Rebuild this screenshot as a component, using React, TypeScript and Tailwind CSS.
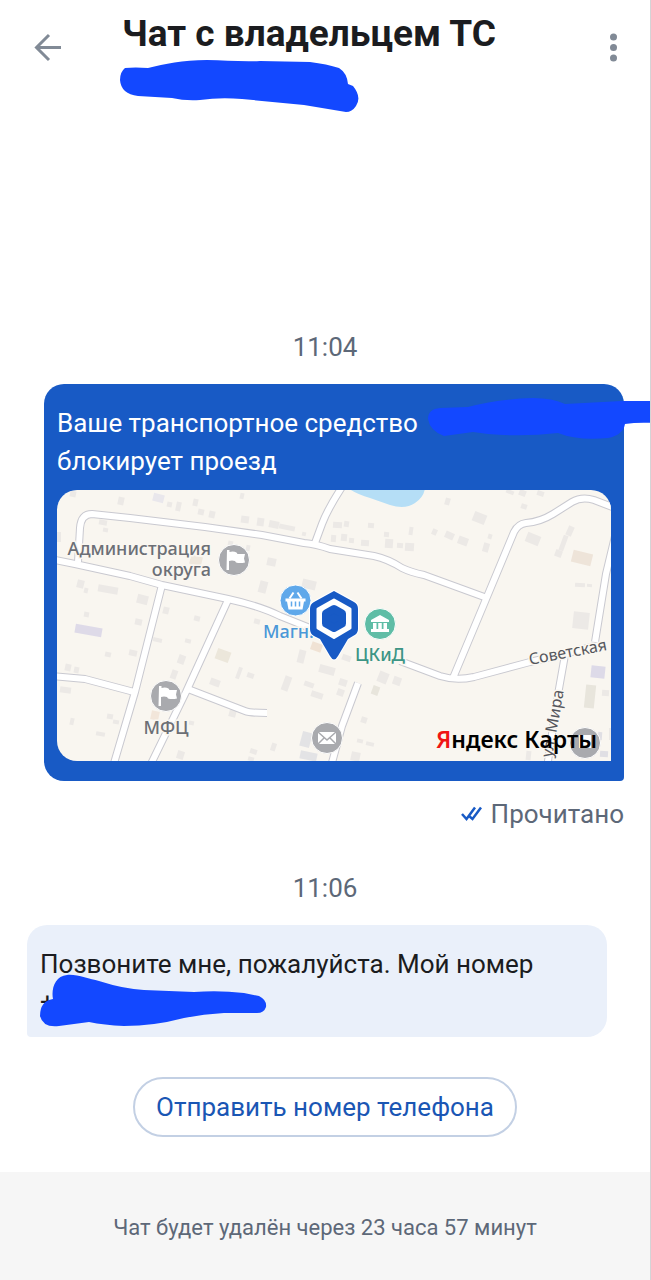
import React from "react";

type Building = [x: number, y: number, w: number, h: number, turn: number, fill?: string];

const ROADS = [
  "M78 562 L80 528 Q81 514 92 514 L130 518 L205 527 L262 535 L304 543 Q316 544 330 549 L374 556 Q388 559 402 568 Q410 572 424 575 L487 598",
  "M315 543 L322 524 Q328 508 344 484",
  "M50 559 L75 564 L130 576 L162 585 L228 599 Q260 606 280 616 L325 634",
  "M400 661 L440 676 Q456 681 474 677 L530 662 L600 645",
  "M162 585 L135 692 L112 770",
  "M228 600 L186 692 L149 768",
  "M50 676 L85 679 L134 692",
  "M188 689 L245 711 Q250 713 267 713",
  "M453 678 L484 604 L514 532 Q518 524 526 523 Q540 522 553 514 L572 502 Q582 496 594 500 L620 510",
  "M616 532 L606 574 L595 642",
  "M565 655 L557 700 L547 768",
  "M358 683 L342 726 L330 770",
];

const BUILDINGS: Building[] = [
  [70, 491, 6, 6, 12], [118, 497, 6, 8, 12], [153, 494, 11, 8, 14, "#e9e7ec"], [167, 502, 5, 5, 12],
  [176, 502, 5, 9, 12], [193, 499, 5, 7, 12], [198, 509, 6, 6, 12], [209, 511, 6, 7, 12],
  [240, 493, 4, 6, 12], [241, 516, 8, 7, 8], [257, 518, 7, 8, 8], [269, 521, 10, 7, 12],
  [279, 525, 16, 5, 12], [302, 532, 4, 4, 12], [99, 520, 8, 5, 10], [103, 528, 5, 4, 10],
  [57, 532, 4, 10, 0], [228, 541, 5, 5, 12], [246, 545, 4, 6, 12], [267, 558, 9, 8, 12],
  [190, 556, 12, 9, 14, "#eee7dc"], [333, 522, 9, 6, 4], [331, 535, 5, 7, 4], [344, 521, 5, 6, 8],
  [341, 534, 6, 7, 6], [349, 538, 5, 5, 6], [361, 540, 8, 6, 4], [368, 523, 6, 5, 4],
  [384, 532, 5, 5, 4], [385, 539, 8, 9, 4], [397, 543, 6, 5, 4], [405, 543, 9, 8, 4],
  [409, 527, 4, 8, 8], [432, 529, 5, 6, 24], [445, 532, 9, 7, 24], [458, 537, 10, 8, 20],
  [445, 498, 5, 7, 16], [473, 513, 13, 10, 22], [488, 534, 4, 5, 16], [483, 543, 6, 9, 16],
  [506, 490, 8, 4, 22], [519, 490, 7, 6, 22], [537, 491, 7, 5, 18], [521, 504, 6, 5, 18],
  [526, 534, 14, 10, 22], [567, 526, 6, 10, 24], [561, 535, 5, 16, 20], [555, 550, 7, 7, 20],
  [572, 552, 20, 12, 14, "#eee4d9"], [77, 580, 7, 8, 14], [84, 588, 4, 5, 14], [98, 586, 20, 7, 10],
  [137, 595, 11, 9, 14], [75, 626, 27, 9, 10, "#dedae8"], [84, 612, 5, 5, 10], [135, 619, 7, 6, 12],
  [153, 638, 9, 4, 12], [129, 650, 8, 6, 12], [105, 652, 6, 5, 12], [65, 664, 6, 7, 12],
  [74, 667, 5, 6, 12], [60, 687, 11, 6, 8], [163, 607, 6, 7, 14], [194, 616, 6, 5, 14],
  [185, 639, 6, 4, 14], [178, 655, 7, 9, 20], [171, 670, 6, 9, 20], [216, 650, 14, 11, 20, "#ece7db"],
  [237, 667, 4, 12, 20], [247, 673, 7, 5, 20], [210, 679, 10, 7, 20], [259, 581, 8, 12, 15],
  [302, 580, 14, 9, 14], [254, 619, 6, 5, 14], [298, 650, 7, 13, 14], [311, 643, 11, 8, 20, "#f0e2d4"],
  [319, 666, 16, 8, 16], [283, 676, 7, 15, 20], [304, 682, 10, 5, 20], [311, 692, 12, 6, 18],
  [342, 655, 9, 6, 20], [339, 679, 8, 7, 18], [337, 689, 7, 7, 20], [378, 672, 10, 11, 22],
  [393, 677, 8, 8, 20], [372, 686, 7, 9, 20, "#e8e5dc"], [70, 718, 4, 7, 12], [96, 732, 9, 4, 10],
  [107, 714, 6, 5, 10], [113, 720, 6, 4, 10], [151, 711, 8, 9, 12, "#f2e6da"], [189, 721, 5, 4, 12],
  [229, 710, 7, 7, 15], [271, 743, 5, 8, 18], [250, 749, 7, 5, 18], [248, 757, 6, 4, 15],
  [301, 732, 10, 15, 15, "#e3e3e5"], [300, 752, 17, 8, 12, "#e3e3e5"], [177, 751, 7, 8, 18],
  [361, 717, 6, 6, 18], [357, 739, 6, 4, 12], [366, 742, 8, 4, 12], [351, 752, 9, 9, 12],
  [575, 583, 10, 4, 4], [587, 584, 5, 3, 4], [573, 612, 16, 17, 6], [591, 666, 14, 12, 6, "#dddae8"],
  [585, 685, 10, 23, 6, "#e8e5dc"], [602, 690, 7, 6, 4], [598, 732, 4, 8, 4, "#e0dfe4"],
  [600, 751, 8, 6, 4, "#e0dfe4"], [609, 728, 2, 12, 0], [526, 751, 5, 9, 6],
];

function MarkerFlag({ cx, cy }: { cx: number; cy: number }) {
  return (
    <g transform={`translate(${cx} ${cy})`}>
      <circle r="15.5" fill="#a9aaae" stroke="#fff" strokeWidth="1" />
      <path d="M-7 -10 h2.500 v2 q4 -1 7 0.500 l1 1.500 h7.500 l-1 4.500 l1 4 q-5 1 -9 0 l-1 -1.500 q-3 -1 -6 0 v9 h-2.500 z" fill="#fff" />
    </g>
  );
}

function StreetMap() {
  return (
    <svg
      viewBox="57 490 554 271"
      preserveAspectRatio="xMidYMid slice"
      className="block w-full rounded-[20px] rounded-br-none"
      role="img"
      aria-label="Карта"
      fontFamily="'Noto Sans', sans-serif"
    >
      <rect x="57" y="490" width="554" height="271" fill="#f9f6f0" />
      {BUILDINGS.map(([x, y, w, h, turn, fill], i) => (
        <rect
          key={i}
          x={x}
          y={y}
          width={w}
          height={h}
          fill={fill ?? "#ece9e6"}
          transform={`rotate(${turn} ${x + w / 2} ${y + h / 2})`}
        />
      ))}
      <path d="M348 488 Q356 494 370 498 L390 505 Q405 510 415 503 Q424 497 425 488 Z" fill="#b5def6" />
      <g fill="none" stroke="#c9c9d0" strokeWidth="8" strokeLinejoin="round">
        {ROADS.map((d) => <path key={d} d={d} />)}
      </g>
      <g fill="none" stroke="#fff" strokeWidth="6" strokeLinejoin="round">
        {ROADS.map((d) => <path key={d} d={d} />)}
      </g>

      <g fill="#6c6f76" stroke="#faf7f1" strokeWidth="3" paintOrder="stroke" fontSize="18" fontWeight="500">
        <text x="211" y="555" textAnchor="end">Администрация</text>
        <text x="211" y="576" textAnchor="end">округа</text>
        <text x="166" y="734" textAnchor="middle">МФЦ</text>
        <text x="263" y="638" fill="#4a98d8">Магн.</text>
        <text x="380" y="661" textAnchor="middle" fill="#3d9585">ЦКиД</text>
      </g>
      <g fill="#55565c" stroke="#faf7f1" strokeWidth="3" paintOrder="stroke" fontSize="16">
        <text transform="translate(530 665) rotate(-11)">Советская</text>
        <text transform="translate(552 758) rotate(-80)">ул. Мира</text>
      </g>

      <MarkerFlag cx={234} cy={560} />
      <MarkerFlag cx={166} cy={696} />

      <g transform="translate(327 738)">
        <circle r="15.5" fill="#a9aaae" stroke="#fff" />
        <rect x="-9" y="-6" width="18" height="12" fill="#fff" />
        <path d="M-9 -6 L0 2 L9 -6 M-9 6 L-3 0 M9 6 L3 0" fill="none" stroke="#a9aaae" strokeWidth="1.5" />
      </g>

      <g transform="translate(295.500 600.500)">
        <circle r="15.500" fill="#5fa8ea" stroke="#fff" />
        <path d="M-10 -2 H10 V1 H8.500 L7 9 H-7 L-8.500 1 H-10 Z" fill="#fff" />
        <path d="M-6 -2 L-2 -8 M6 -2 L2 -8" stroke="#fff" strokeWidth="2" />
        <path d="M-4 1 V6 M0 1 V6 M4 1 V6" stroke="#5fa8ea" strokeWidth="1.500" />
      </g>

      <g transform="translate(380 624)">
        <circle r="15.500" fill="#5fbda6" stroke="#fff" />
        <path d="M0 -9 L9 -4 V-2 H-9 V-4 Z M-9 5 H9 V8 H-9 Z M-7 -1 h3.500 v6 h-3.500 z M-1.750 -1 h3.500 v6 h-3.500 z M3.500 -1 h3.500 v6 h-3.500 z" fill="#fff" />
      </g>

      <g transform="translate(585 743)">
        <circle r="15.500" fill="#a9aaae" stroke="#fff" />
        <path d="M-6 -8 H6 V5 H-6 Z" fill="#fff" />
      </g>

      <path
        d="M334 591 L354 602 Q358 604 358 609 V629 Q358 634 353 636 L348 639 L338 656 Q334 663 330 656 L320 639 L314 636 Q310 634 310 629 V609 Q310 604 314 602 Z"
        fill="#185ac5"
        stroke="#fff"
        strokeWidth="2"
        paintOrder="stroke"
      />
      <path d="M334 600 L350 609 V628 L334 637.500 L318 628 V609 Z" fill="#fff" stroke="#fff" strokeWidth="3" strokeLinejoin="round" />
      <path d="M334 609 L342 613.500 V623.500 L334 628 L326 623.500 V613.500 Z" fill="#185ac5" stroke="#185ac5" strokeWidth="8" strokeLinejoin="round" />

      <text x="436" y="748" fontWeight="600" fontSize="23" fill="#000">
        <tspan fill="#f01414">Я</tspan>ндекс Карты
      </text>
    </svg>
  );
}

export default function App() {
  return (
    <div className="flex min-h-screen flex-col overflow-x-hidden border-r border-[#d4d4d6] bg-white font-['Roboto',sans-serif] text-[26px] text-[#1b1c20]">
      <header className="flex items-start pl-8 pr-5">
        <button type="button" aria-label="Назад" className="mt-8 flex size-8 items-center justify-center">
          <svg viewBox="0 0 32 32" className="size-8" fill="none" stroke="#818a96" strokeWidth="3">
            <path d="M29 15.500 H5 M17 3 L4.500 15.500 L17 28" />
          </svg>
        </button>
        <div className="ml-14 flex-1 pt-3">
          <h1 className="pl-[2px] text-[37px] leading-[44px] font-bold whitespace-nowrap">Чат с владельцем ТС</h1>
          <svg viewBox="0 0 240 54" className="mt-[3px] block h-[54px] w-[240px]" aria-hidden="true">
            <path
              d="M5 9 Q15 8 28 9 C45 5 62 1 87 1 C105 1 120 3 140 2 L190 3 Q207 5 219 9 Q227 14 228 25 L233 27 Q242 38 236 47 Q232 53 226 53 L184 46 L122 40 Q100 38 80 41 Q65 42 52 39 L18 37 Q1 35 0 21 Q0 13 5 9 Z"
              fill="#1348ff"
            />
          </svg>
        </div>
        <button type="button" aria-label="Меню" className="mt-8 flex size-8 items-center justify-center">
          <svg viewBox="0 0 32 32" className="size-8" fill="#818a96">
            <circle cx="15.500" cy="5" r="3.500" />
            <circle cx="15.500" cy="15.500" r="3.500" />
            <circle cx="15.500" cy="26" r="3.500" />
          </svg>
        </button>
      </header>

      <main className="flex flex-1 flex-col justify-end pb-[35px]">
        <time className="text-center leading-8 text-[#5d6878]">11:04</time>

        <article className="relative mt-[21px] mr-[26px] ml-11 rounded-[20px] rounded-br-sm bg-[#185ac5] px-[13px] pt-5 pb-5 text-white">
          <p className="mb-[10px] leading-[38px]">
            Ваше транспортное средство
            <br />
            блокирует проезд
          </p>
          <StreetMap />
          <svg viewBox="0 0 224 44" className="absolute top-[9px] -right-[28px] h-[44px] w-[224px] overflow-visible" aria-hidden="true">
            <path
              d="M0 26 Q0 16 12 15 L40 14 Q70 6 105 5 Q125 5 137 11 L194 8 L226 8 V30 Q210 29 197 31 Q195 42 180 45 Q150 48 130 40 Q95 44 60 41 L45 39 L16 43 Q2 38 0 26 Z"
              fill="#1348ff"
            />
          </svg>
        </article>

        <div className="mt-[15px] mr-[26px] flex items-center justify-end gap-2 leading-9 text-[#5d6878]">
          <svg viewBox="0 0 22 18" className="h-[18px] w-[22px]" fill="none" stroke="#185ac5" strokeWidth="2.500">
            <path d="M1 9 L5.500 14 L14 2.500 M8 11 L11.500 14 L20 2.500" />
          </svg>
          <span>Прочитано</span>
        </div>

        <time className="mt-10 text-center leading-8 text-[#5d6878]">11:06</time>

        <article className="relative mt-[21px] mr-[43px] ml-[27px] rounded-[20px] rounded-bl-sm bg-[#eaf0fa] px-[13px] pt-5 pb-4">
          <p className="leading-[38px]">
            Позвоните мне, пожалуйста. Мой номер
            <br />
            <span>+</span>
          </p>
          <svg viewBox="0 0 228 54" className="absolute top-[48px] left-3 h-[54px] w-[228px]" aria-hidden="true">
            <path
              d="M14 26 C12 16 16 3 28 2 C38 1 50 6 60 8 Q85 16 105 17 L155 19 Q180 17 205 20 L220 23 Q228 27 227 34 Q225 40 218 40 L185 40 Q165 41 145 45 Q115 53 85 53 Q65 52 50 49 Q35 51 20 53 Q4 55 1 43 Q1 28 14 26 Z"
              fill="#1348ff"
            />
          </svg>
        </article>

        <button
          type="button"
          className="mt-10 self-center rounded-full border-2 border-[#c3d0e4] px-[21px] py-3 leading-8 text-[#1a56b4]"
        >
          Отправить номер телефона
        </button>
      </main>

      <footer className="bg-[#f6f6f6] px-4 pt-[38px] pb-[34px] text-center text-[22px] leading-9 text-[#5d6878]">
        Чат будет удалён через 23 часа 57 минут
      </footer>
    </div>
  );
}
